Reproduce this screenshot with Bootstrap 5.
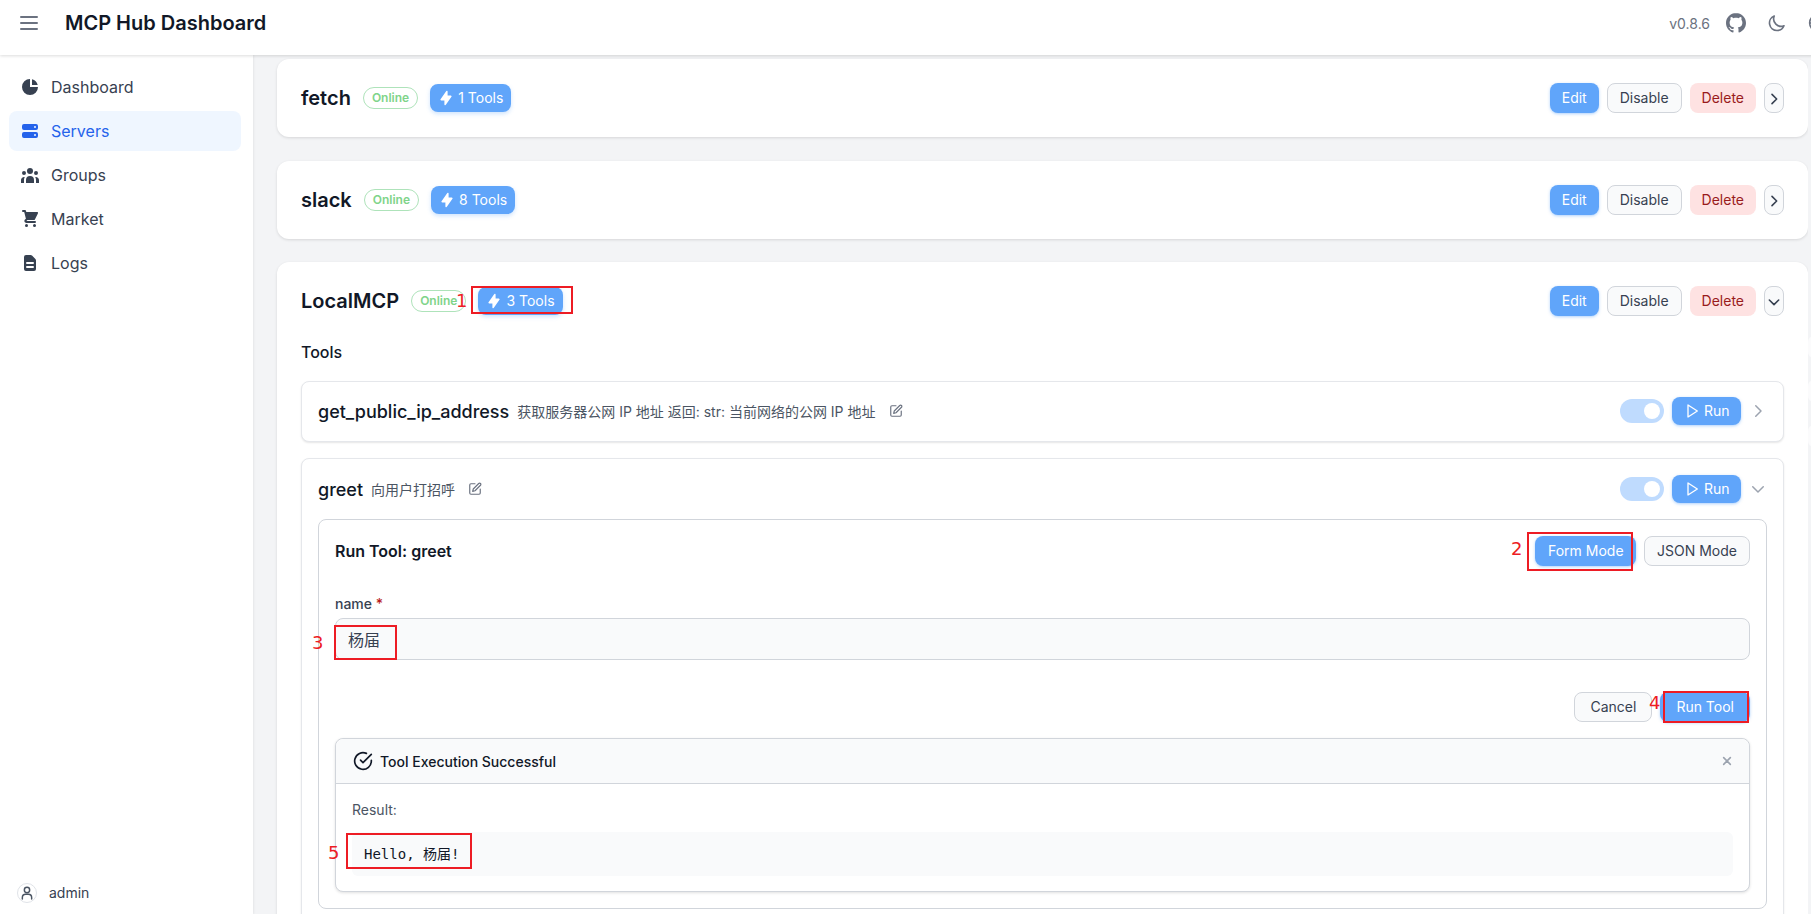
<!doctype html>
<html lang="en">
<head>
<meta charset="utf-8">
<title>MCP Hub Dashboard</title>
<link rel="stylesheet" href="https://cdn.jsdelivr.net/npm/bootstrap@5.3.0/dist/css/bootstrap.min.css">
<style>
html,body{height:914px;overflow:hidden}
body{font-family:Inter,"Noto Sans CJK SC",sans-serif;font-size:14px;color:#111827;background:#f3f4f6}
.hub-page{position:relative;width:1811px;height:914px;overflow:hidden;background:#f3f4f6}
.hub-top{position:relative;z-index:5;height:55px;width:1860px;background:#fff;box-shadow:0 1px 3px rgba(0,0,0,.14);padding:0 0 9px 17px}
.hub-title{font-size:20px;font-weight:600;color:#111827;margin-left:24px;line-height:28px}
.hub-ver{font-size:14px;color:#6b7280;margin-right:-5px}
.hub-topicons{color:#6b7280;gap:21px;margin-left:auto;margin-right:32px}
.hub-body{height:859px}
.hub-side{width:253px;flex:none;background:#fff;box-shadow:1px 0 2px rgba(0,0,0,.06);padding:12px 12px 0 9px;position:relative;z-index:2}
.hub-link{height:40px;border-radius:8px;color:#374151;font-size:16px;padding:0 0 0 11px;gap:11px;margin-bottom:4px}
.hub-link:hover{color:#374151}
.hub-link.is-on{background:#eff6ff;color:#2563eb}
.hub-user{position:absolute;left:17px;bottom:11px;gap:12px;color:#374151;font-size:14px}
.hub-ava{width:20px;height:20px;border:1px solid #e0e3e8;border-radius:50%;color:#4b5563}
.hub-main{width:1555px;flex:none;padding:4px 0 0 24px;overflow:hidden}
.hub-card{background:#fff;border-radius:12px;box-shadow:0 1px 3px rgba(0,0,0,.12);padding:24px;margin-bottom:23.6px;border:0}
.hub-name{font-size:20px;font-weight:600;line-height:28px;margin:0 12px 0 0;color:#111827}
.hub-online{font-size:12px;font-weight:600;line-height:16px;padding:2px 8px;border:1px solid #aee3ba;border-radius:999px;color:#80d48a;background:#fff;margin-right:12px}
.hub-count{background:#60a5fa;color:#fff;font-size:14px;line-height:20px;padding:4px 8px;border-radius:8px;box-shadow:0 2px 4px rgba(96,165,250,.3);font-weight:400;gap:4px}
.hub-btn{font-size:14px;line-height:20px;padding:5px 12px;border-radius:8px;border:0;font-weight:400}
.hub-blue,.hub-blue:hover{background:#60a5fa;color:#fff;box-shadow:0 1px 3px rgba(96,165,250,.5)}
.hub-light,.hub-light:hover{background:#f9fafb;color:#374151;border:1px solid #d1d5db;padding:4px 12px}
.hub-red,.hub-red:hover{background:#fee2e2;color:#991b1b}
.hub-arrow{width:20px;padding:0}
.hub-run{padding:4px 11.5px;gap:4px}
.hub-formbtn{padding:5px 12.5px}
.hub-cancel{padding:4px 15px}
.hub-go{padding:5px 16px}
.hub-sect{font-size:16px;font-weight:500;line-height:24px;margin:24px 0 17px;color:#111827}
.hub-panel{background:#fff;border:1px solid #e5e7eb;border-radius:8px;box-shadow:0 1px 2px rgba(0,0,0,.1);padding:16px;margin-bottom:16px}
.hub-panel-a{padding-top:15px}
.hub-tool{font-size:18px;font-weight:500;color:#111827;margin-right:8px}
.hub-desc{font-size:14px;color:#4b5563;margin-right:13px}
.hub-pen{color:#6b7280}
.hub-toggle{width:44px;height:24px;border-radius:12px;background:#bfdbfe;padding:4px}
.hub-knob{width:16px;height:16px;border-radius:50%;background:#fff}
.hub-chev{width:18px;color:#9ca3af}
.hub-inner{border:1px solid #d1d5db;border-radius:8px;padding:16px;margin-top:16px;background:#fff}
.hub-runtitle{font-size:16px;font-weight:600;color:#111827;margin:0}
.hub-label{font-size:14px;font-weight:500;line-height:20px;color:#374151;margin:28px 0 4px}
.hub-star{color:#b91c1c}
.hub-input,.hub-input:focus{height:42px;background:#f9fafb;border:1px solid #d1d5db;border-radius:8px;font-size:16px;padding:0 12px;color:#374151;box-shadow:none;font-family:Inter,"Noto Sans CJK SC",sans-serif}
.hub-actions{margin-top:32px}
.hub-result{border:1px solid #d1d5db;border-radius:8px;margin-top:16px;box-shadow:0 1px 3px rgba(0,0,0,.12);background:#fff}
.hub-reshead{height:45px;background:#f9fafb;border-bottom:1px solid #d1d5db;border-radius:8px 8px 0 0;padding:0 17px;gap:7px;color:#111827;font-weight:500;font-size:14px}
.hub-resbody{padding:16px 16px 15px}
.hub-reslabel{font-size:14px;line-height:20px;color:#4b5563;margin-bottom:12px}
.hub-code{height:44px;background:#f9fafb;border-radius:6px;padding:12px;font-family:"DejaVu Sans Mono","Noto Sans CJK SC",monospace;font-size:14px;line-height:20px;color:#111827;margin:0}
.hub-x{color:#9ca3af;margin-left:auto;margin-right:-3px}
.hub-mark{position:absolute;z-index:6;border:2px solid #ed1c24;pointer-events:none}
.hub-num{position:absolute;z-index:6;color:#ed1c24;font-family:"DejaVu Sans",sans-serif;font-size:18px;line-height:20px}
.hub-blob{position:absolute;z-index:1;left:1808px;width:12px;height:22px;background:#fbfbfc;border-radius:8px}
.hub-b1{top:336px}.hub-b2{top:380px}.hub-b3{top:425px}
</style>
</head>
<body>
<div class="hub-page">
  <header class="hub-top d-flex align-items-center">
    <svg width="24" height="24" viewBox="0 0 24 24" fill="none" stroke="#6b7280" stroke-width="2" stroke-linecap="round"><path d="M4 6h16M4 12h16M4 18h16"/></svg>
    <div class="hub-title">MCP Hub Dashboard</div>
    <div class="hub-topicons d-flex align-items-center">
      <span class="hub-ver">v0.8.6</span>
      <svg width="20" height="20" viewBox="0 0 24 24" fill="currentColor"><path d="M12 0c-6.626 0-12 5.373-12 12 0 5.302 3.438 9.8 8.2 11.387.599.111.793-.261.793-.577v-2.234c-3.338.726-4.033-1.416-4.033-1.416-.546-1.387-1.333-1.756-1.333-1.756-1.089-.745.083-.729.083-.729 1.205.084 1.839 1.237 1.839 1.237 1.07 1.834 2.807 1.304 3.492.997.107-.775.418-1.305.762-1.604-2.665-.305-5.467-1.334-5.467-5.931 0-1.311.469-2.381 1.236-3.221-.124-.303-.535-1.524.117-3.176 0 0 1.008-.322 3.301 1.23.957-.266 1.983-.399 3.003-.404 1.02.005 2.047.138 3.006.404 2.291-1.552 3.297-1.23 3.297-1.23.653 1.653.242 2.874.118 3.176.77.84 1.235 1.911 1.235 3.221 0 4.609-2.807 5.624-5.479 5.921.43.372.823 1.102.823 2.222v3.293c0 .319.192.694.801.576 4.765-1.589 8.199-6.086 8.199-11.386 0-6.627-5.373-12-12-12z"/></svg>
      <svg width="20" height="20" viewBox="0 0 24 24" fill="none" stroke="currentColor" stroke-width="2" stroke-linecap="round" stroke-linejoin="round"><path d="M20.354 15.354A9 9 0 018.646 3.646 9.003 9.003 0 0012 21a9.003 9.003 0 008.354-5.646z"/></svg>
      <svg width="20" height="20" viewBox="0 0 24 24" fill="none" stroke="currentColor" stroke-width="2"><circle cx="12" cy="12" r="10"/><path d="M2 12h20M12 2c3 3 4 6 4 10s-1 7-4 10c-3-3-4-6-4-10s1-7 4-10z"/></svg>
    </div>
  </header>
  <div class="hub-body d-flex">
    <aside class="hub-side">
      <nav class="nav flex-column">
        <a class="hub-link d-flex align-items-center text-decoration-none" href="#"><svg width="20" height="20" viewBox="0 0 20 20" fill="currentColor"><path d="M2 10a8 8 0 018-8v8h8a8 8 0 11-16 0z"/><path d="M12 2.252A8.014 8.014 0 0117.748 8H12V2.252z"/></svg>Dashboard</a>
        <a class="hub-link is-on d-flex align-items-center text-decoration-none" href="#"><svg width="20" height="20" viewBox="0 0 20 20" fill="currentColor"><path fill-rule="evenodd" d="M2 5a2 2 0 012-2h12a2 2 0 012 2v2a2 2 0 01-2 2H4a2 2 0 01-2-2V5zm14 1a1 1 0 11-2 0 1 1 0 012 0zM2 13a2 2 0 012-2h12a2 2 0 012 2v2a2 2 0 01-2 2H4a2 2 0 01-2-2v-2zm14 1a1 1 0 11-2 0 1 1 0 012 0z" clip-rule="evenodd"/></svg>Servers</a>
        <a class="hub-link d-flex align-items-center text-decoration-none" href="#"><svg width="20" height="20" viewBox="0 0 20 20" fill="currentColor"><path d="M13 6a3 3 0 11-6 0 3 3 0 016 0zM18 8a2 2 0 11-4 0 2 2 0 014 0zM14 15a4 4 0 00-8 0v3h8v-3zM6 8a2 2 0 11-4 0 2 2 0 014 0zM16 18v-3a5.972 5.972 0 00-.75-2.906A3.005 3.005 0 0119 15v3h-3zM4.75 12.094A5.973 5.973 0 004 15v3H1v-3a3 3 0 013.75-2.906z"/></svg>Groups</a>
        <a class="hub-link d-flex align-items-center text-decoration-none" href="#"><svg width="20" height="20" viewBox="0 0 20 20" fill="currentColor"><path d="M3 1a1 1 0 000 2h1.22l.305 1.222a.997.997 0 00.01.042l1.358 5.43-.893.892C3.74 11.846 4.632 14 6.414 14H15a1 1 0 000-2H6.414l1-1H14a1 1 0 00.894-.553l3-6A1 1 0 0017 3H6.28l-.31-1.243A1 1 0 005 1H3zM16 16.5a1.5 1.5 0 11-3 0 1.5 1.5 0 013 0zM6.5 18a1.5 1.5 0 100-3 1.5 1.5 0 000 3z"/></svg>Market</a>
        <a class="hub-link d-flex align-items-center text-decoration-none" href="#"><svg width="20" height="20" viewBox="0 0 20 20" fill="currentColor"><path fill-rule="evenodd" d="M4 4a2 2 0 012-2h4.586A2 2 0 0112 2.586L15.414 6A2 2 0 0116 7.414V16a2 2 0 01-2 2H6a2 2 0 01-2-2V4zm2 6a1 1 0 011-1h6a1 1 0 110 2H7a1 1 0 01-1-1zm1 3a1 1 0 100 2h6a1 1 0 100-2H7z" clip-rule="evenodd"/></svg>Logs</a>
      </nav>
      <div class="hub-user d-flex align-items-center">
        <span class="hub-ava d-flex align-items-center justify-content-center"><svg width="16" height="16" viewBox="0 0 24 24" fill="none" stroke="currentColor" stroke-width="2.2" stroke-linecap="round"><circle cx="12" cy="7.5" r="4"/><path d="M5 21v-2a5 5 0 015-5h4a5 5 0 015 5v2"/></svg></span>
        <span>admin</span>
      </div>
    </aside>
    <main class="hub-main">

      <section class="hub-card card">
        <div class="d-flex align-items-center justify-content-between">
          <div class="d-flex align-items-center">
            <h2 class="hub-name">fetch</h2>
            <span class="hub-online">Online</span>
            <span class="hub-count d-inline-flex align-items-center"><svg width="16" height="16" viewBox="0 0 20 20" fill="currentColor"><path d="M11.3 1.046A1 1 0 0112 2v5h4a1 1 0 01.82 1.573l-7 10A1 1 0 018 18v-5H4a1 1 0 01-.82-1.573l7-10a1 1 0 011.12-.38z"/></svg>1 Tools</span>
          </div>
          <div class="d-flex gap-2">
            <button class="btn hub-btn hub-blue">Edit</button>
            <button class="btn hub-btn hub-light">Disable</button>
            <button class="btn hub-btn hub-red">Delete</button>
            <button class="btn hub-btn hub-light hub-arrow" aria-label="Expand"><svg width="16" height="16" viewBox="0 0 24 24" fill="none" stroke="currentColor" stroke-width="2.4" stroke-linecap="round" stroke-linejoin="round"><path d="M9 5l7 7-7 7"/></svg></button>
          </div>
        </div>
      </section>

      <section class="hub-card card">
        <div class="d-flex align-items-center justify-content-between">
          <div class="d-flex align-items-center">
            <h2 class="hub-name">slack</h2>
            <span class="hub-online">Online</span>
            <span class="hub-count d-inline-flex align-items-center"><svg width="16" height="16" viewBox="0 0 20 20" fill="currentColor"><path d="M11.3 1.046A1 1 0 0112 2v5h4a1 1 0 01.82 1.573l-7 10A1 1 0 018 18v-5H4a1 1 0 01-.82-1.573l7-10a1 1 0 011.12-.38z"/></svg>8 Tools</span>
          </div>
          <div class="d-flex gap-2">
            <button class="btn hub-btn hub-blue">Edit</button>
            <button class="btn hub-btn hub-light">Disable</button>
            <button class="btn hub-btn hub-red">Delete</button>
            <button class="btn hub-btn hub-light hub-arrow" aria-label="Expand"><svg width="16" height="16" viewBox="0 0 24 24" fill="none" stroke="currentColor" stroke-width="2.4" stroke-linecap="round" stroke-linejoin="round"><path d="M9 5l7 7-7 7"/></svg></button>
          </div>
        </div>
      </section>

      <section class="hub-card card">
        <div class="d-flex align-items-center justify-content-between">
          <div class="d-flex align-items-center">
            <h2 class="hub-name">LocalMCP</h2>
            <span class="hub-online">Online</span>
            <span class="hub-count d-inline-flex align-items-center"><svg width="16" height="16" viewBox="0 0 20 20" fill="currentColor"><path d="M11.3 1.046A1 1 0 0112 2v5h4a1 1 0 01.82 1.573l-7 10A1 1 0 018 18v-5H4a1 1 0 01-.82-1.573l7-10a1 1 0 011.12-.38z"/></svg>3 Tools</span>
          </div>
          <div class="d-flex gap-2">
            <button class="btn hub-btn hub-blue">Edit</button>
            <button class="btn hub-btn hub-light">Disable</button>
            <button class="btn hub-btn hub-red">Delete</button>
            <button class="btn hub-btn hub-light hub-arrow" aria-label="Collapse"><svg width="16" height="16" viewBox="0 0 24 24" fill="none" stroke="currentColor" stroke-width="2.4" stroke-linecap="round" stroke-linejoin="round"><path d="M5 9l7 7 7-7"/></svg></button>
          </div>
        </div>

        <h3 class="hub-sect">Tools</h3>

        <div class="hub-panel hub-panel-a d-flex align-items-center justify-content-between">
          <div class="d-flex align-items-center">
            <span class="hub-tool">get_public_ip_address</span>
            <span class="hub-desc">获取服务器公网 IP 地址 返回: str: 当前网络的公网 IP 地址</span>
            <svg class="hub-pen" width="14" height="14" viewBox="0 0 24 24" fill="none" stroke="currentColor" stroke-width="2" stroke-linecap="round" stroke-linejoin="round"><path d="M12 3H5a2 2 0 00-2 2v14a2 2 0 002 2h14a2 2 0 002-2v-7"/><path d="M18.4 2.6a2.1 2.1 0 013 3L12 15l-4 1 1-4z"/></svg>
          </div>
          <div class="d-flex align-items-center gap-2">
            <div class="hub-toggle d-flex justify-content-end"><span class="hub-knob"></span></div>
            <button class="btn hub-btn hub-blue hub-run d-inline-flex align-items-center"><svg width="16" height="16" viewBox="0 0 24 24" fill="none" stroke="currentColor" stroke-width="2" stroke-linejoin="round"><polygon points="6 3 20 12 6 21 6 3"/></svg>Run</button>
            <span class="hub-chev d-flex justify-content-center"><svg width="18" height="18" viewBox="0 0 24 24" fill="none" stroke="currentColor" stroke-width="2" stroke-linecap="round" stroke-linejoin="round"><path d="M9 5l7 7-7 7"/></svg></span>
          </div>
        </div>

        <div class="hub-panel">
          <div class="d-flex align-items-center justify-content-between">
            <div class="d-flex align-items-center">
              <span class="hub-tool">greet</span>
              <span class="hub-desc">向用户打招呼</span>
              <svg class="hub-pen" width="14" height="14" viewBox="0 0 24 24" fill="none" stroke="currentColor" stroke-width="2" stroke-linecap="round" stroke-linejoin="round"><path d="M12 3H5a2 2 0 00-2 2v14a2 2 0 002 2h14a2 2 0 002-2v-7"/><path d="M18.4 2.6a2.1 2.1 0 013 3L12 15l-4 1 1-4z"/></svg>
            </div>
            <div class="d-flex align-items-center gap-2">
              <div class="hub-toggle d-flex justify-content-end"><span class="hub-knob"></span></div>
              <button class="btn hub-btn hub-blue hub-run d-inline-flex align-items-center"><svg width="16" height="16" viewBox="0 0 24 24" fill="none" stroke="currentColor" stroke-width="2" stroke-linejoin="round"><polygon points="6 3 20 12 6 21 6 3"/></svg>Run</button>
              <span class="hub-chev d-flex justify-content-center"><svg width="18" height="18" viewBox="0 0 24 24" fill="none" stroke="currentColor" stroke-width="2" stroke-linecap="round" stroke-linejoin="round"><path d="M5 9l7 7 7-7"/></svg></span>
            </div>
          </div>

          <div class="hub-inner">
            <div class="d-flex align-items-center justify-content-between">
              <h4 class="hub-runtitle">Run Tool: greet</h4>
              <div class="d-flex gap-2">
                <button class="btn hub-btn hub-blue hub-formbtn">Form Mode</button>
                <button class="btn hub-btn hub-light">JSON Mode</button>
              </div>
            </div>
            <label class="form-label hub-label d-block">name <span class="hub-star">*</span></label>
            <input class="form-control hub-input" type="text" value="杨届">
            <div class="hub-actions d-flex justify-content-end gap-2">
              <button class="btn hub-btn hub-light hub-cancel">Cancel</button>
              <button class="btn hub-btn hub-blue hub-go">Run Tool</button>
            </div>
            <div class="hub-result">
              <div class="hub-reshead d-flex align-items-center">
                <svg width="20" height="20" viewBox="0 0 24 24" fill="none" stroke="currentColor" stroke-width="2" stroke-linecap="round" stroke-linejoin="round"><path d="M22 11.08V12a10 10 0 11-5.93-9.14"/><path d="M9 11l3 3L22 4"/></svg>
                <span>Tool Execution Successful</span>
                <svg class="hub-x" width="16" height="16" viewBox="0 0 24 24" fill="none" stroke="currentColor" stroke-width="2.4" stroke-linecap="round"><path d="M7 7l10 10M17 7L7 17"/></svg>
              </div>
              <div class="hub-resbody">
                <div class="hub-reslabel">Result:</div>
                <pre class="hub-code">Hello, 杨届!</pre>
              </div>
            </div>
          </div>
        </div>
      </section>
    </main>
  </div>

  <span class="hub-blob hub-b1"></span><span class="hub-blob hub-b2"></span><span class="hub-blob hub-b3"></span>

  <div class="hub-mark" style="left:471px;top:286px;width:102px;height:28px"></div>
  <span class="hub-num" style="left:456px;top:291px">1</span>
  <div class="hub-mark" style="left:1527px;top:532px;width:106px;height:39px"></div>
  <span class="hub-num" style="left:1511px;top:539px">2</span>
  <div class="hub-mark" style="left:334px;top:625px;width:63px;height:35px"></div>
  <span class="hub-num" style="left:312px;top:633px">3</span>
  <div class="hub-mark" style="left:1663px;top:691px;width:86px;height:32px"></div>
  <span class="hub-num" style="left:1649px;top:693px">4</span>
  <div class="hub-mark" style="left:346px;top:833px;width:126px;height:36px"></div>
  <span class="hub-num" style="left:328px;top:843px">5</span>
</div>
<script src="https://cdn.jsdelivr.net/npm/bootstrap@5.3.0/dist/js/bootstrap.bundle.min.js"></script>
</body>
</html>
